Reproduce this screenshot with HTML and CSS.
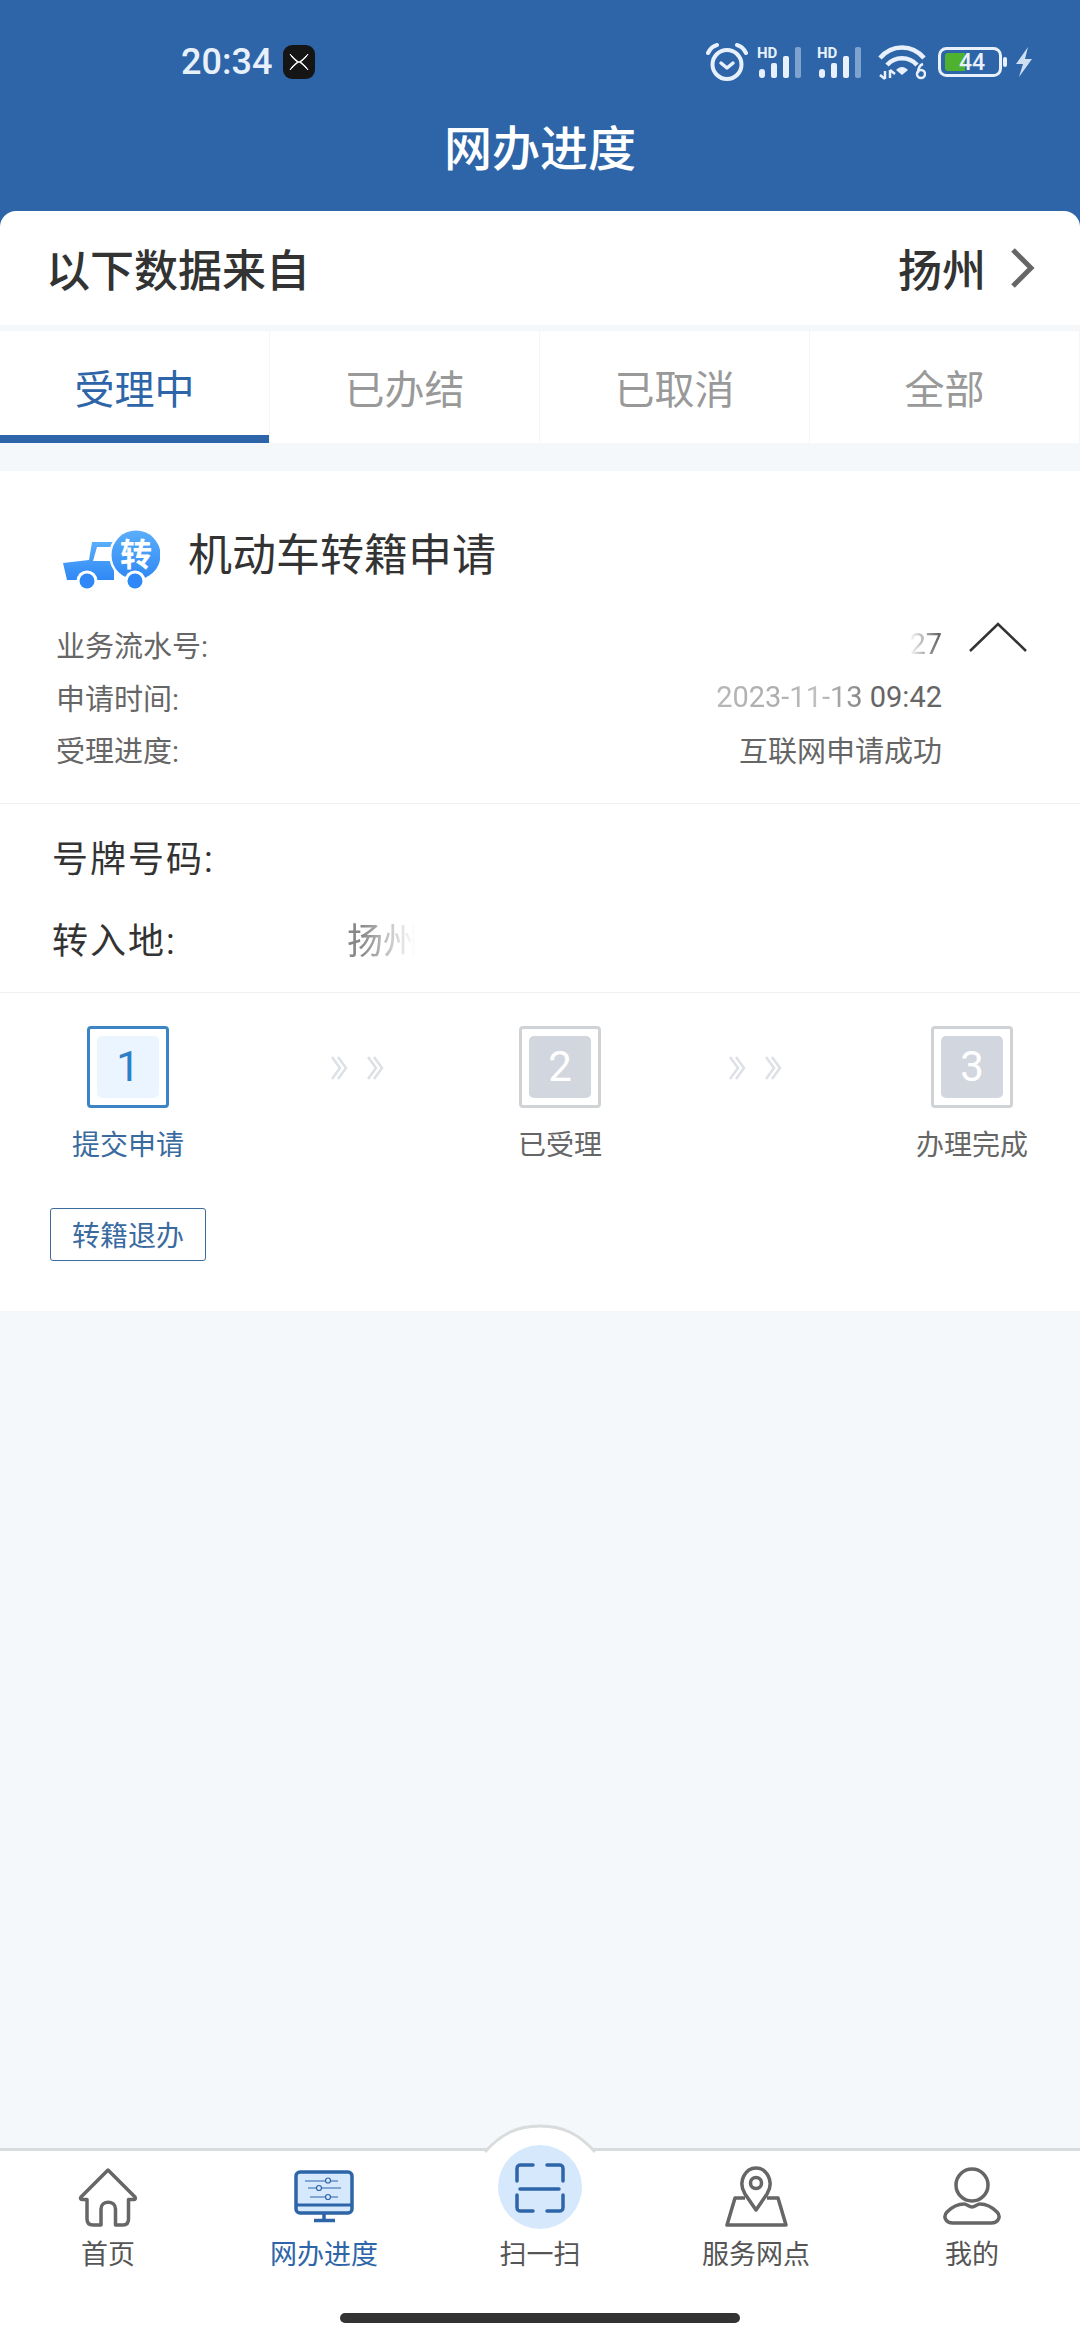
FILE: index.html
```html
<!DOCTYPE html>
<html lang="zh-CN">
<head>
    <meta charset="UTF-8">
    <meta name="viewport" content="width=device-width, initial-scale=1.0">
    <title>网办进度</title>
    <link rel="stylesheet" href="styles.css">
</head>
<body>

    <header class="top">
        <div class="status">
            <span class="time">20:34</span>
            <span class="app-badge">
                <svg width="22" height="22" viewBox="0 0 22 22"><path d="M2 3 C7 8 9 10 11 11 C13 10 15 8 20 3 C17 8 14 10 12.5 11 C14 12 17 14 20 19 C15 14 13 12 11 11 C9 12 7 14 2 19 C5 14 8 12 9.5 11 C8 10 5 8 2 3Z" fill="#fff" stroke="#fff" stroke-width="1"/></svg>
            </span>
            <div class="status-icons">
                <svg class="ic-alarm" width="42" height="38" viewBox="0 0 42 38" fill="none" stroke="#e8f1fb">
                    <circle cx="21" cy="21.5" r="14.5" stroke-width="4"/>
                    <path d="M15 20 L21 25 L27 20" stroke-width="3.5" stroke-linecap="round" stroke-linejoin="round"/>
                    <path d="M2 10 C4 6 7 3 11 2 M40 10 C38 6 35 3 31 2" stroke-width="4" stroke-linecap="round"/>
                </svg>
                <svg class="ic-signal" width="50" height="32" viewBox="0 0 50 32">
                    <text x="0" y="12" class="hd">HD</text>
                    <rect x="2" y="23" width="6" height="9" rx="3" fill="#e8f1fb"/>
                    <rect x="14" y="17" width="6" height="15" rx="2" fill="#e8f1fb"/>
                    <rect x="26" y="10" width="6" height="22" rx="2" fill="#e8f1fb"/>
                    <rect x="38" y="1" width="6" height="31" rx="2" fill="#7fa3cf"/>
                </svg>
                <svg class="ic-signal" width="50" height="32" viewBox="0 0 50 32">
                    <text x="0" y="12" class="hd">HD</text>
                    <rect x="2" y="23" width="6" height="9" rx="3" fill="#e8f1fb"/>
                    <rect x="14" y="17" width="6" height="15" rx="2" fill="#e8f1fb"/>
                    <rect x="26" y="10" width="6" height="22" rx="2" fill="#e8f1fb"/>
                    <rect x="38" y="1" width="6" height="31" rx="2" fill="#7fa3cf"/>
                </svg>
                <svg class="ic-wifi" width="48" height="36" viewBox="0 0 48 36" fill="none" stroke="#e8f1fb">
                    <path d="M2 14 C14 0 34 0 46 14" stroke-width="4.5"/>
                    <path d="M9 21 C17 12 31 12 39 21" stroke-width="4.5"/>
                    <path d="M18 26 L24 31 L30 26 C26 22 22 22 18 26Z" fill="#e8f1fb" stroke="none"/>
                    <path d="M7 27 V35 M2 31 L7 35 M12 26 V34 M12 26 L17 30" stroke-width="2.5"/>
                    <circle cx="43" cy="30" r="4" stroke-width="2.5"/>
                    <path d="M40 29 C40 24 42 21 45 20" stroke-width="2.5"/>
                </svg>
                <svg class="ic-battery" width="70" height="30" viewBox="0 0 70 30">
                    <rect x="1.5" y="1.5" width="61" height="27" rx="7" fill="none" stroke="#e8f1fb" stroke-width="3"/>
                    <path d="M10 6 H27 V24 H10 A3 3 0 0 1 7 21 V9 A3 3 0 0 1 10 6Z" fill="#4fb22f"/>
                    <rect x="65" y="10" width="4" height="10" rx="2" fill="#e8f1fb"/>
                    <text x="34" y="23" class="level">44</text>
                </svg>
                <svg class="ic-bolt" width="18" height="30" viewBox="0 0 18 30">
                    <path d="M13 0 L1 17 H8 L4 30 L17 12 H10Z" fill="#cfdff2"/>
                </svg>
            </div>
        </div>
        <h1 class="page-title">网办进度</h1>
    </header>

    <div class="source">
        <span class="source-label">以下数据来自</span>
        <span class="source-city">扬州</span>
        <svg class="source-arrow" width="28" height="42" viewBox="0 0 28 42" fill="none">
            <path d="M5 3 L23 21 L5 39" stroke="#666" stroke-width="5"/>
        </svg>
    </div>

    <nav class="tabs">
        <a class="tab active">受理中</a>
        <a class="tab">已办结</a>
        <a class="tab">已取消</a>
        <a class="tab">全部</a>
    </nav>

    <section class="card">
        <div class="card-head">
            <svg class="truck" width="100" height="62" viewBox="0 0 100 62">
                <defs>
                    <linearGradient id="truckBlue" x1="0" y1="0" x2="0" y2="1">
                        <stop offset="0" stop-color="#5aaefa"/>
                        <stop offset="1" stop-color="#2f88f5"/>
                    </linearGradient>
                </defs>
                <path d="M32 12 H54 V50 H7 L3 33 L29 30Z" fill="url(#truckBlue)"/>
                <path d="M37 17 H54 V31 H33Z" fill="#fff"/>
                <circle cx="76" cy="25" r="27" fill="#fff"/>
                <circle cx="76" cy="25" r="24.5" fill="url(#truckBlue)"/>
                <text x="76" y="36" class="truck-mark">转</text>
                <circle cx="27" cy="51" r="10.5" fill="#fff"/>
                <circle cx="27" cy="51" r="7.5" fill="#2f88f5"/>
                <circle cx="75" cy="51" r="10.5" fill="#fff"/>
                <circle cx="75" cy="51" r="7.5" fill="#2f88f5"/>
            </svg>
            <h2 class="card-title">机动车转籍申请</h2>
        </div>

        <div class="summary">
            <div class="info">
                <div class="info-row"><span>业务流水号:</span><span class="fade-serial">27</span></div>
                <div class="info-row"><span>申请时间:</span><span><span class="fade-date">2023-11-13</span> 09:42</span></div>
                <div class="info-row"><span>受理进度:</span><span>互联网申请成功</span></div>
            </div>
            <svg class="collapse" width="60" height="32" viewBox="0 0 60 32" fill="none">
                <path d="M2 30 L30 3 L58 30" stroke="#333" stroke-width="2.5"/>
            </svg>
        </div>

        <div class="details">
            <div class="detail-row"><span class="detail-name">号牌号码:</span></div>
            <div class="detail-row"><span class="detail-name">转入地:</span><span class="detail-city">扬州</span></div>
        </div>

        <div class="steps-wrap">
            <div class="steps">
                <div class="step current">
                    <div class="step-box"><span class="step-num">1</span></div>
                    <span class="step-name">提交申请</span>
                </div>
                <svg class="step-arrows first" width="62" height="26" viewBox="0 0 62 26" fill="none" stroke="#dde0e4" stroke-width="2.5">
                    <path d="M2 2 L10 13 L2 24 M8 2 L16 13 L8 24 M38 2 L46 13 L38 24 M44 2 L52 13 L44 24"/>
                </svg>
                <div class="step">
                    <div class="step-box"><span class="step-num">2</span></div>
                    <span class="step-name">已受理</span>
                </div>
                <svg class="step-arrows" width="62" height="26" viewBox="0 0 62 26" fill="none" stroke="#dde0e4" stroke-width="2.5">
                    <path d="M2 2 L10 13 L2 24 M8 2 L16 13 L8 24 M38 2 L46 13 L38 24 M44 2 L52 13 L44 24"/>
                </svg>
                <div class="step">
                    <div class="step-box"><span class="step-num">3</span></div>
                    <span class="step-name">办理完成</span>
                </div>
            </div>
            <button class="btn-cancel" type="button">转籍退办</button>
        </div>
    </section>

    <footer class="tabbar">
        <svg class="hump" width="112" height="30" viewBox="0 0 112 30">
            <path d="M1 28 C17 10 33 2 56 2 C79 2 95 10 111 28 V30 H1Z" fill="#fff"/>
            <path d="M1 28 C17 10 33 2 56 2 C79 2 95 10 111 28" fill="none" stroke="#d9dcdc" stroke-width="3"/>
        </svg>
        <div class="nav-row">
            <a class="nav-item">
                <span class="nav-icon">
                    <svg width="60" height="60" viewBox="0 0 60 60" fill="none" stroke="#666" stroke-width="3.5" stroke-linejoin="round">
                        <path d="M30 3 L57 30 C58 31.5 57 32.5 56 32.5 H50.5 V52 C50.5 56 48.500 58 45 58 H37.500 V42 C37.500 33 23 33 23 42 V58 H15 C11 58 9 56 9 52 V32.500 H4 C2.500 32.500 2 31 3 30Z"/>
                    </svg>
                </span>
                <span class="nav-label">首页</span>
            </a>
            <a class="nav-item active">
                <span class="nav-icon">
                    <svg width="60" height="54" viewBox="0 0 60 54" fill="none" stroke="#2d65a8">
                        <rect x="2" y="2" width="56" height="41" rx="4" fill="#d6e8fb" stroke-width="3.500"/>
                        <path d="M2 35 H58" stroke-width="3"/>
                        <path d="M30 43 V50 M20 50.500 H41" stroke-width="3.500"/>
                        <path d="M11 11 H44 M14 18 H47 M16 27 H44" stroke-width="1.200"/>
                        <circle cx="34" cy="10.500" r="2.500" fill="#d6e8fb" stroke-width="1.200"/>
                        <circle cx="25" cy="18" r="2.500" fill="#d6e8fb" stroke-width="1.200"/>
                        <circle cx="34" cy="27" r="2.500" fill="#d6e8fb" stroke-width="1.200"/>
                    </svg>
                </span>
                <span class="nav-label">网办进度</span>
            </a>
            <a class="nav-item">
                <span class="nav-icon">
                    <span class="scan-circle">
                        <svg width="84" height="84" viewBox="0 0 84 84" fill="none" stroke="#2d65a8" stroke-width="3.500" stroke-linecap="round">
                            <path d="M35 20 H23 C20 20 19 21 19 24 V36 M49 20 H61 C64 20 65 21 65 24 V36 M19 50 V62 C19 65 20 66 23 66 H35 M65 50 V62 C65 65 64 66 61 66 H49 M22 44 H61"/>
                        </svg>
                    </span>
                </span>
                <span class="nav-label">扫一扫</span>
            </a>
            <a class="nav-item">
                <span class="nav-icon">
                    <svg width="64" height="62" viewBox="0 0 64 62" fill="none" stroke="#666" stroke-width="3.500" stroke-linejoin="round">
                        <path d="M32 44 L21 28 C13 15 22 2 32 2 C42 2 51 15 43 28Z"/>
                        <circle cx="32" cy="17" r="5.500"/>
                        <path d="M21 32 H11 L3 59 H62 L54 32 H43"/>
                    </svg>
                </span>
                <span class="nav-label">服务网点</span>
            </a>
            <a class="nav-item">
                <span class="nav-icon">
                    <svg width="60" height="60" viewBox="0 0 60 60" fill="none" stroke="#666" stroke-width="3.500">
                        <circle cx="30" cy="18" r="16"/>
                        <path d="M11 56 H49 C57 56 59 49 55 45 C50 40 44 37 38 37 C35 37 33 40 30 40 C27 40 25 37 22 37 C16 37 10 40 5 45 C1 49 3 56 11 56Z"/>
                    </svg>
                </span>
                <span class="nav-label">我的</span>
            </a>
        </div>
        <div class="home-bar"></div>
    </footer>

</body>
</html>
```

FILE: styles.css
```css
* {
    box-sizing: border-box;
}

body {
    margin: 0;
    width: 1080px;
    height: 2340px;
    display: flex;
    flex-direction: column;
    overflow: hidden;
    background-color: #f5f8fa;
    color: #333;
    font-family: Roboto, "Noto Sans CJK SC", sans-serif;
}

/* header */
.top {
    height: 227px;
    background-color: #2d65a8;
}

.status {
    height: 44px;
    margin-top: 40px;
    padding-left: 181px;
    padding-right: 47px;
    display: flex;
    align-items: center;
    color: #e8f1fb;
}

.time {
    font-size: 36px;
    font-weight: 500;
}

.app-badge {
    width: 32px;
    height: 34px;
    margin-left: 11px;
    display: flex;
    align-items: center;
    justify-content: center;
    background-color: #151515;
    border-radius: 9px;
}

.status-icons {
    margin-left: auto;
    display: flex;
    align-items: center;
}

.ic-signal {
    margin-left: 9px;
}

.ic-signal + .ic-signal {
    margin-left: 10px;
}

.ic-wifi {
    margin-left: 11px;
}

.ic-battery {
    margin-left: 12px;
}

.ic-bolt {
    margin-left: 7px;
}

.hd {
    font-family: Roboto, sans-serif;
    font-size: 15px;
    font-weight: 700;
    fill: #e8f1fb;
}

.level {
    font-family: Roboto, sans-serif;
    font-size: 23px;
    font-weight: 500;
    fill: #e8f1fb;
    text-anchor: middle;
}

.page-title {
    margin: 0;
    line-height: 132px;
    text-align: center;
    font-size: 48px;
    font-weight: 500;
    color: #fff;
}

/* city row */
.source {
    height: 114px;
    margin-top: -16px;
    padding: 0 44px 0 46px;
    display: flex;
    align-items: center;
    background-color: #fff;
    border-radius: 16px 16px 0 0;
    font-size: 44px;
    font-weight: 500;
}

.source-city {
    margin-left: auto;
}

.source-arrow {
    margin-left: 22px;
}

/* tabs */
.tabs {
    height: 112px;
    margin-top: 6px;
    display: grid;
    grid-template-columns: repeat(4, 1fr);
    background-color: #fff;
}

.tab {
    display: flex;
    align-items: center;
    justify-content: center;
    font-size: 40px;
    color: #999;
    border-right: 1px solid #f3f5f6;
}

.tab.active {
    color: #2d65a8;
    box-shadow: inset 0 -8px 0 #2d65a8;
}

/* application card */
.card {
    margin-top: 28px;
    background-color: #fff;
}

.card-head {
    height: 147px;
    padding: 59px 0 0 60px;
    display: flex;
    align-items: flex-start;
}

.card-title {
    margin: -5px 0 0 28px;
    font-size: 44px;
    line-height: 62px;
    font-weight: 400;
}

.truck-mark {
    font-family: "Noto Sans CJK SC", sans-serif;
    font-size: 32px;
    font-weight: 700;
    fill: #fff;
    text-anchor: middle;
}

.summary {
    padding: 0 0 27px 56px;
    display: flex;
    align-items: flex-start;
    border-bottom: 1px solid #f1f2f4;
}

.info {
    width: 886px;
}

.info-row {
    height: 52.5px;
    display: flex;
    align-items: center;
    justify-content: space-between;
    font-size: 29px;
    color: #666;
}

.fade-serial {
    -webkit-mask-image: linear-gradient(to right, transparent, #000 90%);
    mask-image: linear-gradient(to right, transparent, #000 90%);
}

.fade-date {
    -webkit-mask-image: linear-gradient(to right, #0007, #0008 40%, #0006 70%, #000c);
    mask-image: linear-gradient(to right, #0007, #0008 40%, #0006 70%, #000c);
}

.collapse {
    margin: 3px 0 0 26px;
}

.details {
    padding: 11px 0 13px 52px;
}

.detail-row {
    height: 82px;
    display: flex;
    align-items: center;
    font-size: 36px;
    letter-spacing: 2px;
}

.detail-name {
    width: 295px;
    color: #333;
}

.detail-city {
    letter-spacing: 0;
    color: #888;
    -webkit-mask-image: linear-gradient(to right, #000 20%, transparent 95%);
    mask-image: linear-gradient(to right, #000 20%, transparent 95%);
}

/* progress steps */
.steps-wrap {
    padding: 33px 52px 50px 50px;
    position: relative;
    border-top: 1px solid #f1f2f4;
    border-bottom: 1px solid #f4f5f6;
    margin: 0 0;
}

.steps {
    padding-left: 22px;
    display: flex;
    align-items: flex-start;
    justify-content: space-between;
}

.step {
    display: flex;
    flex-direction: column;
    align-items: center;
    gap: 18px;
}

.step-box {
    width: 82px;
    height: 82px;
    padding: 7px;
    border: 3px solid #d0d3d6;
    border-radius: 4px;
}

.step-num {
    width: 100%;
    height: 100%;
    display: flex;
    align-items: center;
    justify-content: center;
    background-color: #d2d6de;
    border-radius: 5px;
    color: #fff;
    font-size: 42px;
}

.step-name {
    font-size: 28px;
    line-height: 40px;
    color: #666;
}

.step.current .step-box {
    border-color: #3b84c6;
}

.step.current .step-num {
    background-color: #eaf5ff;
    color: #2e7fc8;
}

.step.current .step-name {
    color: #3a6b9f;
}

.step-arrows {
    margin-top: 29px;
}

.step-arrows.first {
    margin-left: 20px;
}

.btn-cancel {
    width: 156px;
    height: 53px;
    margin-top: 42px;
    padding: 0;
    display: block;
    background-color: #fff;
    border: 1.5px solid #3a6b9f;
    border-radius: 3px;
    color: #3a6b9f;
    font-family: inherit;
    font-size: 28px;
}

/* bottom navigation */
.tabbar {
    height: 192px;
    margin-top: auto;
    position: relative;
    background-color: #fff;
    border-top: 3px solid #d9dcdc;
}

.hump {
    position: absolute;
    left: 484px;
    top: -27px;
}

.nav-row {
    position: relative;
    padding-top: 14px;
    display: grid;
    grid-template-columns: repeat(5, 216px);
}

.nav-item {
    display: flex;
    flex-direction: column;
    align-items: center;
    color: #555;
}

.nav-item.active {
    color: #2d65a8;
}

.nav-icon {
    height: 64px;
    display: flex;
    align-items: center;
    justify-content: center;
}

.scan-circle {
    width: 84px;
    height: 84px;
    margin-top: -20px;
    display: block;
    flex-shrink: 0;
    background-color: #d6e8fb;
    border-radius: 50%;
}

.nav-label {
    margin-top: 8px;
    font-size: 27px;
    line-height: 36px;
}

.home-bar {
    width: 400px;
    height: 10px;
    margin: 40px auto 0;
    background-color: #333;
    border-radius: 5px;
}
```
